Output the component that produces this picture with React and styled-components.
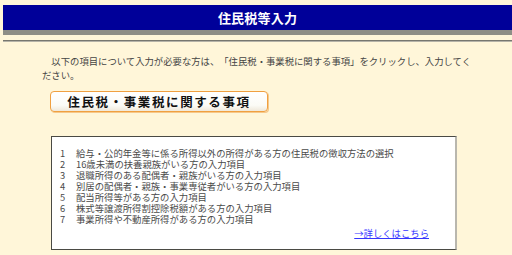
import styled, { createGlobalStyle } from 'styled-components';

const GlobalStyle = createGlobalStyle`
  html, body {
    margin: 0;
    padding: 0;
    background: #fff6d9;
  }
  body {
    font-family: 'Noto Sans CJK JP', 'Noto Sans', sans-serif;
    color: #3a3a3a;
    width: 512px;
    height: 255px;
    overflow: hidden;
    text-spacing-trim: space-all;
  }
`;

const Page = styled.div`
  padding: 5px 0 0 3px;
`;

const TitleBar = styled.div`
  height: 25px;
  background: #000099;
  border-bottom: 5px solid #8e8e86;
  display: flex;
  align-items: center;
  justify-content: center;
  color: #fff;
  font-size: 13px;
  font-weight: bold;
  letter-spacing: 0.2px;
`;

const Rule = styled.div`
  margin-top: 5px;
  height: 0;
  border-top: 1px solid #77776f;
  border-bottom: 1px solid #b5b3a8;
`;

const Intro = styled.p`
  margin: 12px 0 0 39px;
  width: 434px;
  font-size: 9.35px;
  line-height: 14px;
  color: #444;
  text-indent: 1em;
`;

const SectionButton = styled.button`
  display: flex;
  align-items: center;
  justify-content: center;
  margin: 9px 0 0 47px;
  width: 218px;
  height: 21px;
  padding: 0;
  border: 1px solid #f0a040;
  border-radius: 4px;
  background: linear-gradient(#ffffff, #fbfbf6 70%, #efe8da);
  box-shadow: 1px 1px 0 #f6c88a;
  font-family: 'Noto Sans CJK JP', sans-serif;
  font-size: 12.5px;
  font-weight: 700;
  letter-spacing: 1.6px;
  color: #111;
  cursor: pointer;
`;

const ListBox = styled.div`
  margin: 24px 0 0 48px;
  width: 406px;
  height: 114px;
  background: #fff;
  border: 1px solid #4a4a44;
  border-right: 2px solid #b9b7ae;
  padding: 11px 0 0 8px;
  box-sizing: border-box;
`;

const ItemList = styled.ol`
  margin: 0;
  padding: 0;
  list-style: none;
`;

const Item = styled.li`
  display: flex;
  font-size: 9.35px;
  line-height: 11px;
  color: #4a4a4a;
`;

const Num = styled.span`
  width: 16px;
  flex: none;
`;

const MoreRow = styled.div`
  display: flex;
  justify-content: flex-end;
  padding-right: 26px;
  margin-top: 3px;
`;

const MoreLink = styled.a`
  font-size: 9.35px;
  line-height: 11px;
  color: #3535ff;
  text-decoration: underline;
`;

const items = [
  '給与・公的年金等に係る所得以外の所得がある方の住民税の徴収方法の選択',
  '16歳未満の扶養親族がいる方の入力項目',
  '退職所得のある配偶者・親族がいる方の入力項目',
  '別居の配偶者・親族・事業専従者がいる方の入力項目',
  '配当所得等がある方の入力項目',
  '株式等譲渡所得割控除税額がある方の入力項目',
  '事業所得や不動産所得がある方の入力項目',
];

export default function App() {
  return (
    <>
      <GlobalStyle />
      <Page>
        <TitleBar>住民税等入力</TitleBar>
        <Rule />
        <Intro>
          以下の項目について入力が必要な方は、「住民税・事業税に関する事項」をクリックし、入力してください。
        </Intro>
        <SectionButton>住民税・事業税に関する事項</SectionButton>
        <ListBox>
          <ItemList>
            {items.map((text, i) => (
              <Item key={i}>
                <Num>{i + 1}</Num>
                {text}
              </Item>
            ))}
          </ItemList>
          <MoreRow>
            <MoreLink href="#">→詳しくはこちら</MoreLink>
          </MoreRow>
        </ListBox>
      </Page>
    </>
  );
}
